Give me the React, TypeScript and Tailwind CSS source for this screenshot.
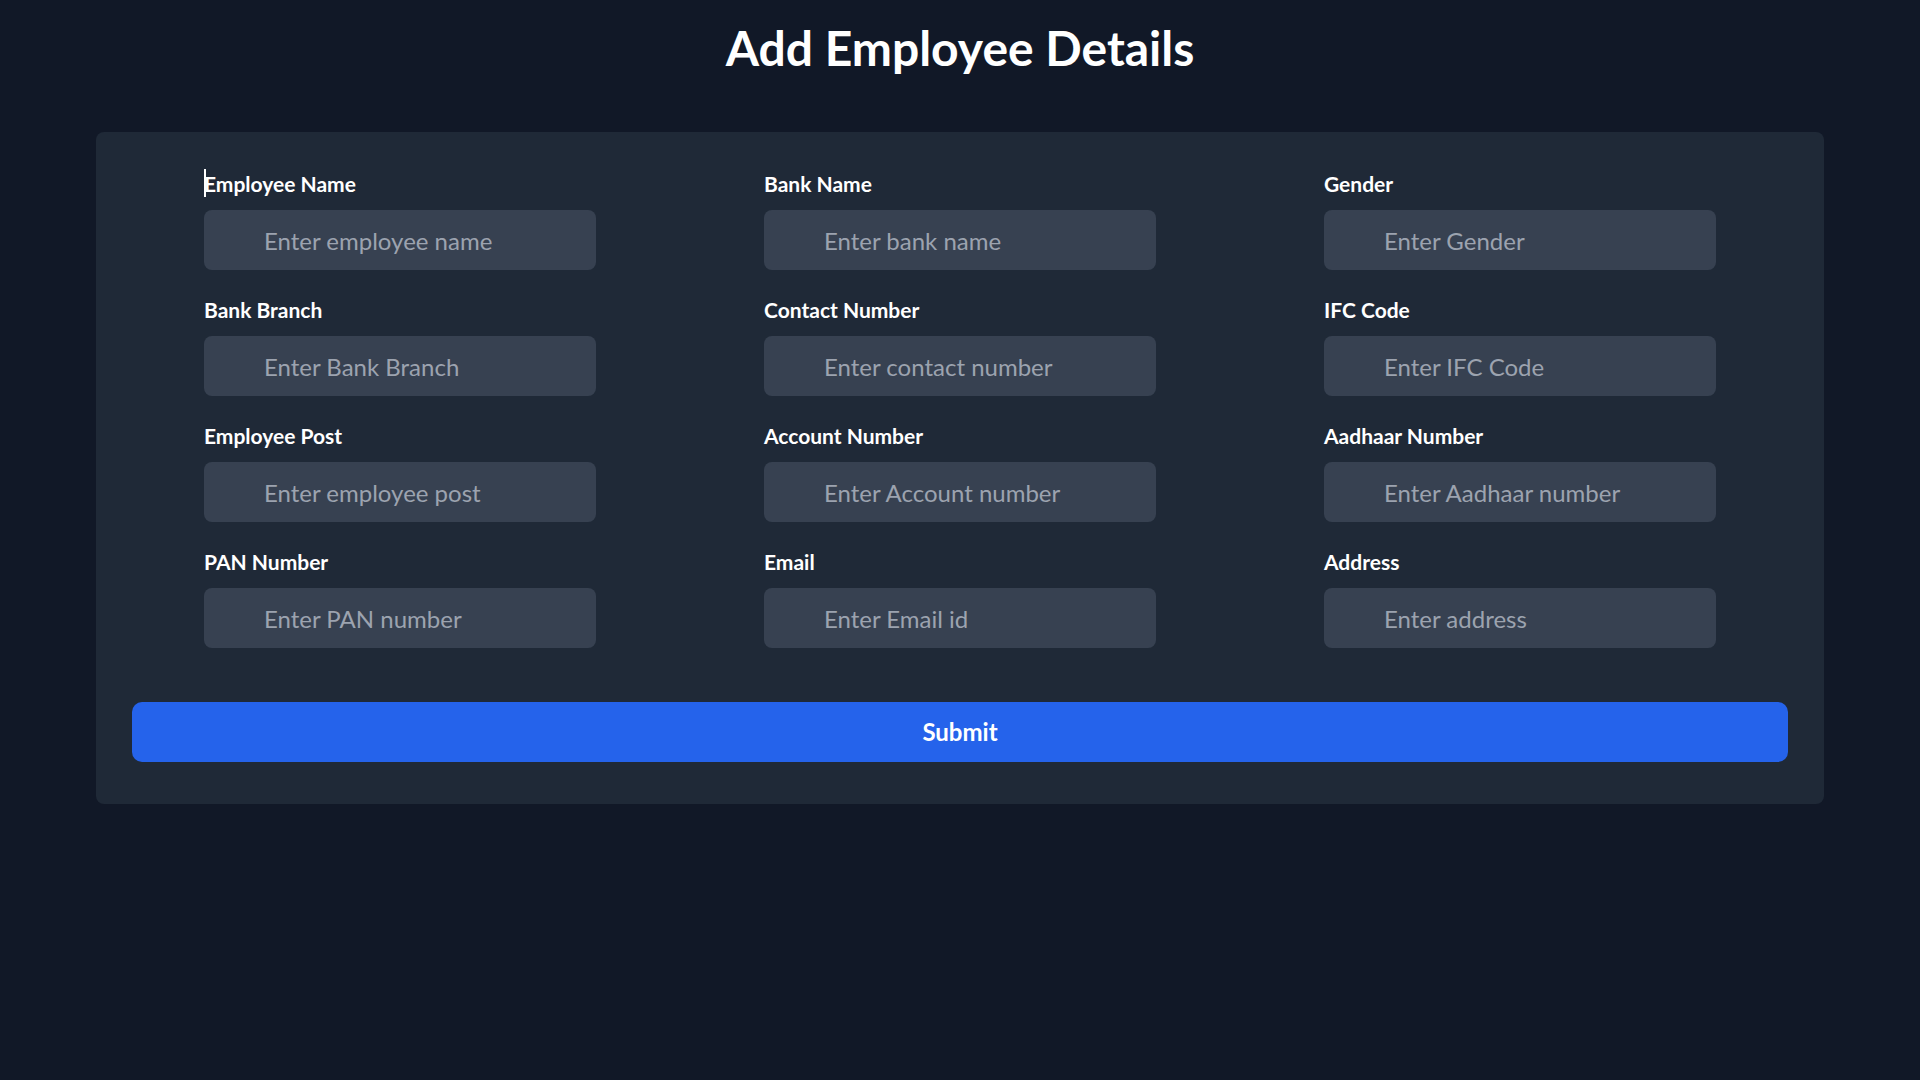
import React from "react";

const fields: { label: string; placeholder: string }[] = [
  { label: "Employee Name", placeholder: "Enter employee name" },
  { label: "Bank Name", placeholder: "Enter bank name" },
  { label: "Gender", placeholder: "Enter Gender" },
  { label: "Bank Branch", placeholder: "Enter Bank Branch" },
  { label: "Contact Number", placeholder: "Enter contact number" },
  { label: "IFC Code", placeholder: "Enter IFC Code" },
  { label: "Employee Post", placeholder: "Enter employee post" },
  { label: "Account Number", placeholder: "Enter Account number" },
  { label: "Aadhaar Number", placeholder: "Enter Aadhaar number" },
  { label: "PAN Number", placeholder: "Enter PAN number" },
  { label: "Email", placeholder: "Enter Email id" },
  { label: "Address", placeholder: "Enter address" },
];

export default function App() {
  return (
    <div className="min-h-screen bg-[#111827] font-['Lato',sans-serif]">
      <h1 className="pt-[24px] text-center text-5xl font-bold text-white">
        Add Employee Details
      </h1>
      <div className="mx-24 mt-[60px] rounded-lg bg-[#1f2937] px-9 pt-[37px] pb-[42px]">
        <div className="grid grid-cols-3 gap-x-6 gap-y-[25px]">
          {fields.map((f, i) => (
            <div key={f.label} className="w-[392px] justify-self-center">
              <label className="relative block pt-px text-[21px] leading-[27px] font-bold text-white">
                {i === 0 && (
                  <span className="absolute left-0 top-0 h-7 w-[2px] bg-white" />
                )}
                {f.label}
              </label>
              <input
                type="text"
                placeholder={f.placeholder}
                className="mt-[13px] h-[60px] w-full rounded-lg bg-[#374151] pl-[60px] text-2xl text-white outline-none placeholder:text-[#9ca3af]"
              />
            </div>
          ))}
        </div>
        <button className="mt-[54px] h-[60px] w-full rounded-[10px] bg-[#2563eb] text-2xl font-bold text-white">
          Submit
        </button>
      </div>
    </div>
  );
}
